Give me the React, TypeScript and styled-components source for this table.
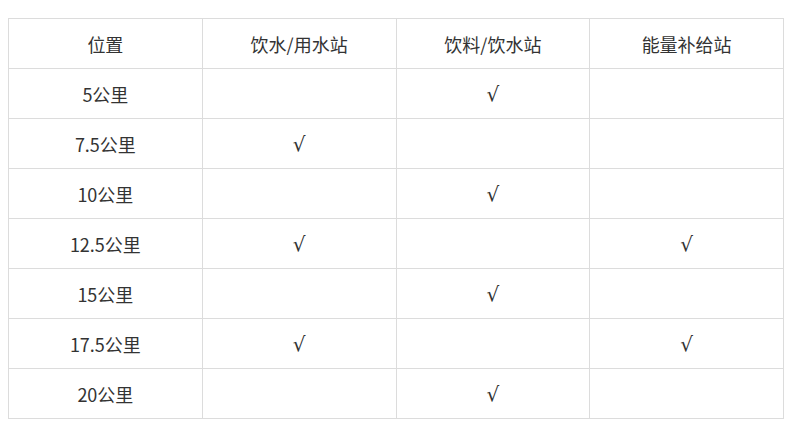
import React from "react";
import styled, { createGlobalStyle } from "styled-components";

const Global = createGlobalStyle`
  html, body { margin: 0; padding: 0; background: #fff; }
  body { font-family: "Microsoft YaHei", "Noto Sans CJK SC", "Noto Sans", sans-serif; }
`;

const Page = styled.div`
  padding: 18px 16px 0 8px;
`;

const Table = styled.table`
  width: 776px;
  border-collapse: collapse;
  table-layout: fixed;
  color: #333;
  font-size: 18px;
`;

const Cell = styled.td`
  height: 49px;
  border: 1px solid #dcdcdc;
  text-align: center;
  vertical-align: middle;
  padding: 0;
  line-height: 22px;
`;

const Head = styled(Cell).attrs({ as: "th" })`
  font-weight: 400;
`;

const Check = styled.span`
  font-family: "DejaVu Sans", "Liberation Sans", sans-serif;
  font-size: 20px;
  line-height: 22px;
  color: #333;
`;

const rows: [string, boolean, boolean, boolean][] = [
  ["5公里", false, true, false],
  ["7.5公里", true, false, false],
  ["10公里", false, true, false],
  ["12.5公里", true, false, true],
  ["15公里", false, true, false],
  ["17.5公里", true, false, true],
  ["20公里", false, true, false],
];

const mark = (v: boolean) => (v ? <Check>√</Check> : null);

export default function App() {
  return (
    <>
      <Global />
      <Page>
        <Table>
          <thead>
            <tr>
              <Head>位置</Head>
              <Head>饮水/用水站</Head>
              <Head>饮料/饮水站</Head>
              <Head>能量补给站</Head>
            </tr>
          </thead>
          <tbody>
            {rows.map(([pos, a, b, c]) => (
              <tr key={pos}>
                <Cell>{pos}</Cell>
                <Cell>{mark(a)}</Cell>
                <Cell>{mark(b)}</Cell>
                <Cell>{mark(c)}</Cell>
              </tr>
            ))}
          </tbody>
        </Table>
      </Page>
    </>
  );
}
